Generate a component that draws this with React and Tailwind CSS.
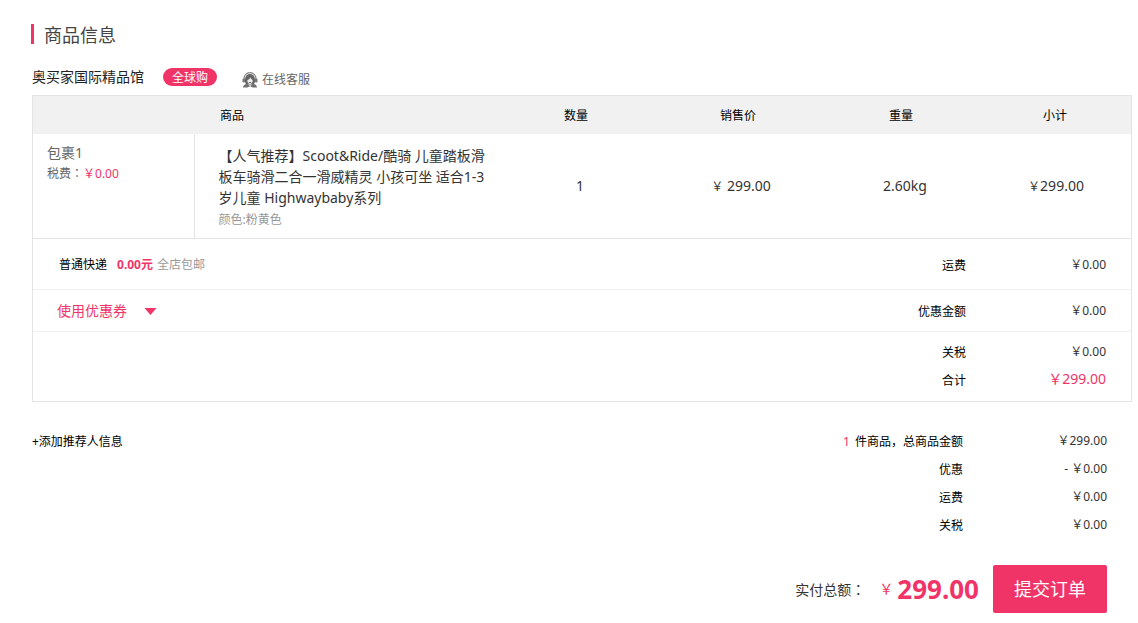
import React, { useState } from 'react';

const headings = ['数量', '销售价', '重量', '小计'];

const summary = [
    { label: '优惠', value: '- ￥0.00' },
    { label: '运费', value: '￥0.00' },
    { label: '关税', value: '￥0.00' },
];

const ServiceIcon = () => (
    <svg width="16" height="16" viewBox="0 0 16 16" fill="none" aria-hidden="true">
        <path d="M2 8C1.800 3.600 4.300 0.700 8 0.700s6.200 2.900 6 7.300" stroke="#888" strokeWidth="1.200" />
        <path d="M3 10C2.500 4.500 5 2 8 2s5.500 2.500 5 8l-1.200 2.500H4.200z" fill="#666" />
        <path d="M5.300 8.200C6.800 7.800 7.900 6.800 8.400 5.600c.4 1.200 1.200 2 2.300 2.600-.1 2.600-1.200 3.800-2.700 3.800s-2.600-1.200-2.700-3.800z" fill="#eee" />
        <rect x="0.500" y="6.500" width="2.500" height="4" rx="1" fill="#777" />
        <rect x="13" y="6.500" width="2.500" height="4" rx="1" fill="#777" />
        <path d="M1 15.500c.2-2.300 1.600-3.300 4-3.700L8 14l3-2.200c2.400.4 3.800 1.400 4 3.700h-4.200L8 14.300l-2.800 1.200z" fill="#707070" />
        <path d="M6.800 10.500h2.400" stroke="#777" strokeWidth="1" />
    </svg>
);

// full-width colon centred in its box
const Colon = () => <span className="font-['Noto_Sans_CJK_TC',sans-serif]">：</span>;

const AmountRow = ({ label, value, valueClass = 'w-[140px]' }) => (
    <div className="flex h-7 justify-end leading-7">
        <span className="pt-px">{label}</span>
        <span className={`${valueClass} text-right text-[#333]`}>{value}</span>
    </div>
);

const ProductTable = () => (
    <table className="w-full table-fixed">
        <colgroup>
            <col className="w-[161px]" />
            <col />
            <col className="w-[162px]" />
            <col className="w-[162px]" />
            <col className="w-[164px]" />
            <col className="w-[144px]" />
        </colgroup>
        <thead className="bg-[#f1f1f1]">
            <tr className="h-[38px]">
                <td />
                <th className="pl-[26px] pt-0.5 text-left font-normal">商品</th>
                {headings.map((h) => (
                    <th key={h} className="pr-2 pt-0.5 font-normal">{h}</th>
                ))}
            </tr>
        </thead>
        <tbody>
            <tr className="h-[104px] text-center text-sm text-[#333]">
                <td className="border-r border-[#e4e4e4] pl-[14px] pt-[9px] text-left align-top text-[#666]">
                    <p>包裹1</p>
                    <p className="text-xs leading-5">
                        税费<Colon /><span className="text-[#f13468]">￥0.00</span>
                    </p>
                </td>
                <td className="pl-6 pt-1 text-left">
                    <p className="w-[276px] leading-[21px]">
                        【人气推荐】Scoot&amp;Ride/酷骑 儿童踏板滑板车骑滑二合一滑威精灵 小孩可坐 适合1-3岁儿童 Highwaybaby系列
                    </p>
                    <p className="text-xs leading-6 text-[#999]">颜色:粉黄色</p>
                </td>
                <td>1</td>
                <td className="pr-0.5"><span className="text-xs">￥</span> 299.00</td>
                <td>2.60kg</td>
                <td className="pr-1.5"><span className="text-xs">￥</span>299.00</td>
            </tr>
        </tbody>
    </table>
);

const App = () => {
    const [open, setOpen] = useState(false);

    return (
        <main className="bg-white pb-2.5 pl-8 pr-1.5 pt-6 font-['Noto_Sans','Noto_Sans_CJK_SC',sans-serif] text-xs text-black">
            <h1 className="-ml-px flex h-5 items-center border-l-3 border-[#f13468] pl-2.5 pt-0.5 text-lg text-[#444]">商品信息</h1>

            <div className="mt-5 flex h-[31px] items-start">
                <h2 className="text-sm leading-[26px] text-[#222]">奥买家国际精品馆</h2>
                <span className="ml-[19px] mt-1 h-[18px] rounded-full bg-[#f13468] px-[9px] leading-5 text-white">全球购</span>
                <a href="#service" className="ml-[25px] mt-2 flex h-4 items-center gap-1 text-[#666]">
                    <ServiceIcon />
                    在线客服
                </a>
            </div>

            <section className="border border-[#e4e4e4]">
                <ProductTable />
                <div className="flex h-[51px] items-center justify-between border-t border-[#e4e4e4] pl-[26px] pr-[25px] pt-0.5">
                    <p>
                        普通快递
                        <strong className="ml-2.5 mr-1 font-bold text-[#f13468]">0.00元</strong>
                        <span className="text-[#999]">全店包邮</span>
                    </p>
                    <AmountRow label="运费" value="￥0.00" />
                </div>
                <div className="flex h-[42px] items-center justify-between border-t border-[#f1f1f1] pl-6 pr-[25px]">
                    <button
                        type="button"
                        aria-expanded={open}
                        onClick={() => setOpen(!open)}
                        className="flex cursor-pointer items-center gap-[17px] text-sm text-[#f13468]"
                    >
                        使用优惠券
                        <svg width="13" height="9" viewBox="0 0 13 9" aria-hidden="true">
                            <path d="M0.500 2h12L6.500 9z" fill="#f13468" />
                        </svg>
                    </button>
                    <AmountRow label="优惠金额" value="￥0.00" />
                </div>
                <div className="border-t border-[#f1f1f1] pb-[7px] pr-[25px] pt-1.5">
                    <AmountRow label="关税" value="￥0.00" />
                    <AmountRow label="合计" value={<span className="text-sm text-[#f13468]">￥299.00</span>} />
                </div>
            </section>

            <div className="flex items-start justify-between pr-[25px] pt-[25px]">
                <button type="button" className="cursor-pointer pt-px leading-7">+添加推荐人信息</button>
                <div>
                    <AmountRow
                        label={<><span className="mr-0.5 text-[#f13468]">1</span> 件商品，总商品金额</>}
                        value="￥299.00"
                        valueClass="w-36"
                    />
                    {summary.map((item) => (
                        <AmountRow key={item.label} {...item} valueClass="w-36" />
                    ))}
                </div>
            </div>

            <div className="mt-[26px] flex items-center justify-end pr-[25px]">
                <span className="text-sm text-[#333]">实付总额<Colon /></span>
                <span className="ml-3.5 text-sm text-[#f13468]">￥</span>
                <strong className="ml-1 text-[26px] font-bold text-[#f13468]">299.00</strong>
                <button type="submit" className="ml-3.5 h-12 cursor-pointer rounded-xs bg-[#f13468] px-[21px] text-lg text-white">提交订单</button>
            </div>
        </main>
    );
};

export default App;
